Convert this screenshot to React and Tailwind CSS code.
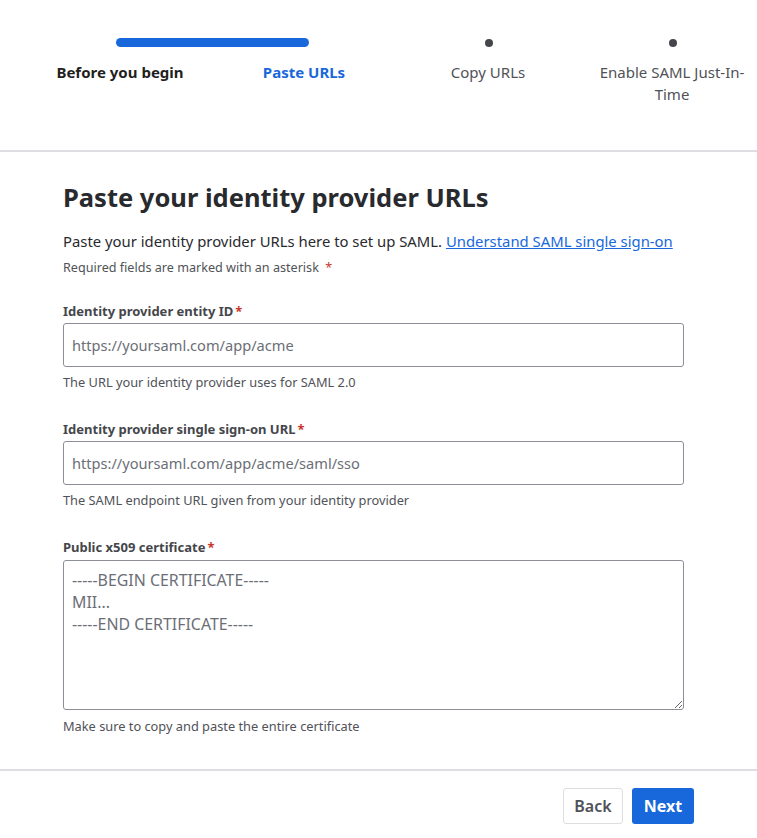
export default function App() {
  return (
    <div className="w-[757px] min-h-[838px] bg-white text-[#292A2E] font-['Noto_Sans',sans-serif]">
      {/* Stepper */}
      <div className="h-[152px] border-b-2 border-[#DDDEE1]">
        <div className="flex items-center pt-[38px]">
          <div className="ml-[116px] h-[9px] w-[193px] rounded-full bg-[#1868DB]" />
          <div className="ml-[176px] h-2 w-2 rounded-full bg-[#44464B]" />
          <div className="ml-[176px] h-2 w-2 rounded-full bg-[#44464B]" />
        </div>
        <div className="ml-[28px] mt-[14px] grid grid-cols-[184px_184px_184px_184px] text-center text-[15px] leading-[22px]">
          <div className="font-bold text-[#1F1F21]">Before you begin</div>
          <div className="font-bold text-[#1868DB]">Paste URLs</div>
          <div className="text-[#505258]">Copy URLs</div>
          <div className="px-[16px] text-[#505258]">Enable SAML Just-In-Time</div>
        </div>
      </div>

      {/* Form */}
      <div className="pl-[63px] pr-[73px] pt-[31px]">
        <h1 className="text-[25.5px] leading-[28px] font-bold text-[#292A2E]">Paste your identity provider URLs</h1>
        <p className="mt-[20px] text-[14.85px] leading-[20px] text-[#292A2E]">
          Paste your identity provider URLs here to set up SAML.{' '}
          <a href="#" className="text-[#1868DB] underline">Understand SAML single sign-on</a>
        </p>
        <p className="mt-[9px] text-[12.6px] leading-[16px] text-[#505258]">
          Required fields are marked with an asterisk <span className="ml-[3px] text-[#C9372C]">*</span>
        </p>

        <Field
          className="mt-[27px]"
          label="Identity provider entity ID"
          placeholder="https://yoursaml.com/app/acme"
          help="The URL your identity provider uses for SAML 2.0"
        />
        <Field
          className="mt-[31px]"
          label="Identity provider single sign-on URL"
          placeholder="https://yoursaml.com/app/acme/saml/sso"
          help="The SAML endpoint URL given from your identity provider"
        />

        <div className="mt-[31px]">
          <label className="block text-[13px] leading-[16px] font-bold text-[#44464B]">
            Public x509 certificate<span className="ml-[2px] text-[#C9372C]">*</span>
          </label>
          <textarea
            className="mt-[5px] block h-[150px] w-full resize-y rounded-[3px] border border-[#8C8F97] px-[8px] py-[8px] text-[15.9px] leading-[22px] text-[#292A2E] placeholder-[#6B6E76] outline-none"
            placeholder={'-----BEGIN CERTIFICATE-----\nMII...\n-----END CERTIFICATE-----'}
          />
          <p className="mt-[8px] text-[12.8px] leading-[16px] text-[#505258]">Make sure to copy and paste the entire certificate</p>
        </div>
      </div>

      {/* Footer */}
      <div className="mt-[35px] border-t-2 border-[#DDDEE1]">
        <div className="flex justify-end gap-[9px] pr-[63px] pt-[17px]">
          <button className="h-[36px] w-[60px] rounded-[3px] border border-[#DDDEE1] bg-white text-[16px] font-semibold text-[#505258]">Back</button>
          <button className="h-[36px] w-[62px] rounded-[3px] bg-[#1868DB] text-[16px] font-bold text-white">Next</button>
        </div>
      </div>
    </div>
  );
}

function Field({ className, label, placeholder, help }) {
  return (
    <div className={className}>
      <label className="block text-[13px] leading-[16px] font-bold text-[#44464B]">
        {label}<span className="ml-[2px] text-[#C9372C]">*</span>
      </label>
      <input
        className="mt-[4px] block h-[44px] w-full rounded-[3px] border border-[#8C8F97] px-[8px] text-[14.6px] text-[#292A2E] placeholder-[#6B6E76] outline-none"
        placeholder={placeholder}
      />
      <p className="mt-[7px] text-[12.8px] leading-[16px] text-[#505258]">{help}</p>
    </div>
  );
}
